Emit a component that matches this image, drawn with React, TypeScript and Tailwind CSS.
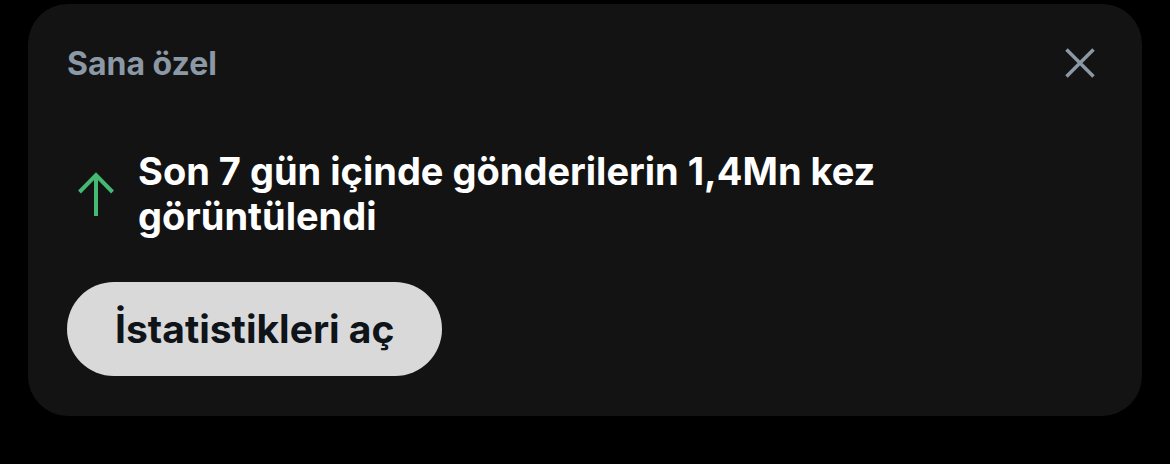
export default function App() {
  return (
    <div className="h-[464px] w-[1170px] bg-black pl-[28px] pr-[28px] pt-[4px] font-['Inter','Noto_Sans',sans-serif]">
      <div className="h-[412px] rounded-[40px] bg-[#131313] pl-[39px] pr-[44px] pt-[38px]">
        <div className="flex items-start justify-between">
          <div className="text-[32px] font-bold leading-[44px] text-[#8b98a5]">Sana özel</div>
          <svg className="mt-[3px] h-[36px] w-[36px]" viewBox="0 0 24 24" fill="none" stroke="#8b98a5" strokeWidth="2.3">
            <path d="M3 3 L21 21 M21 3 L3 21" />
          </svg>
        </div>

        <div className="mt-[63px] flex items-center gap-[23px]">
          <svg className="ml-[10px] h-[46px] w-[38px] shrink-0" viewBox="0 0 38 46" fill="none" stroke="#45b972" strokeWidth="4" strokeLinejoin="miter">
            <path d="M19 4 V45 M2.5 21 L19 4 L35.5 21" />
          </svg>
          <div className="text-[38px] font-bold leading-[45px] text-white">
            Son 7 gün içinde gönderilerin 1,4Mn kez
            <br />
            görüntülendi
          </div>
        </div>

        <button className="mt-[43px] flex h-[94px] items-center rounded-full bg-[#d9d9d9] px-[48px] text-[39px] font-bold text-[#0f1419]">
          İstatistikleri aç
        </button>
      </div>
    </div>
  )
}
